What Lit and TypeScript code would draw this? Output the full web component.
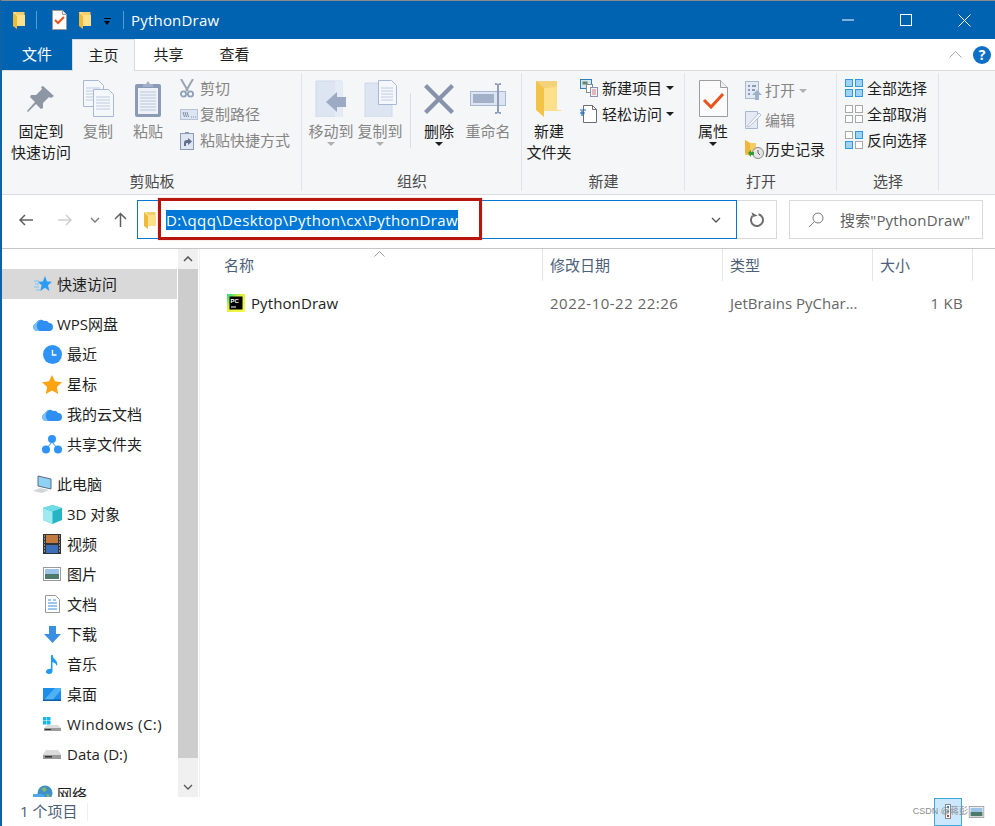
import { LitElement, html, css, svg } from "lit";
import { customElement } from "lit/decorators.js";

const folderSmall = html`<svg width="12" height="18" viewBox="0 0 12 18"><path d="M0 1h11.500v13.500H3z" fill="#f3cf6b"/><path d="M4 4h8v11H4z" fill="#fde08a"/><path d="M0 1l4 3v14l-4-3z" fill="#f0b93a"/><path d="M0 1h2l2 3v1z" fill="#fbe7a6"/></svg>`;
const folderBig = html`<svg width="26" height="37" viewBox="0 0 26 37"><path d="M0 1h21v5h0v24H0z" fill="#f4d279"/><path d="M7 9l14-3v24l5 0H7z" fill="#fbdc7e"/><path d="M0 1l8 7v29L0 30z" fill="#f3c248"/><path d="M8 8h13v22h4l1 1H8z" fill="#fce08c"/></svg>`;
const taskCheck = html`<svg width="15" height="20" viewBox="0 0 15 20"><path d="M.5.5h10l4 4v15H.5z" fill="#fbfbfb" stroke="#9a9a9a"/><path d="M10.500.5v4h4" fill="#eee" stroke="#9a9a9a"/><path d="M3 10l3 3 6-6" fill="none" stroke="#e8541c" stroke-width="2"/></svg>`;
const pin = html`<svg width="28" height="27" viewBox="0 0 28 27"><path d="M16 1l11 10-3 2-2-1-6 6 0 5-2 1-5-5-8 8-1-1 8-9-5-5 1-2 5 0 6-6-1-2z" fill="#8d97a3"/></svg>`;
const page = (x: number, y: number, w: number, h: number) => svg`<path d="M${x + .5} ${y + .5}h${w - 5}l5 5v${h - 5}h-${w}z" fill="#f4f7fc" stroke="#a8b8d4"/><path d="M${x + 3} ${y + 8}h${w - 6}M${x + 3} ${y + 11}h${w - 6}M${x + 3} ${y + 14}h${w - 6}M${x + 3} ${y + 17}h${w - 6}M${x + 3} ${y + 20}h${w - 6}" stroke="#c0cce0"/>`;
const copy = html`<svg width="31" height="37" viewBox="0 0 31 37">${page(0, 0, 20, 26)}${page(10, 9, 20, 27)}</svg>`;
const clipboard = html`<svg width="28" height="38" viewBox="0 0 28 38"><rect x="1" y="4" width="26" height="33" rx="2" fill="#8b9ab6"/><rect x="4" y="8" width="20" height="26" fill="#eef2f8"/><path d="M6 12h16M6 15h16M6 18h16M6 21h16M6 24h16M6 27h16M6 30h16" stroke="#b9c6dc"/><path d="M9 7V4h3l2-3 2 3h3v3z" fill="#a4b0c8"/></svg>`;
const scissors = html`<svg width="14" height="19" viewBox="0 0 14 19"><path d="M1 0l7 12M13 0L6 12" stroke="#9aa4b4" stroke-width="2"/><circle cx="3.500" cy="15" r="2.600" fill="none" stroke="#8ea0ba" stroke-width="1.800"/><circle cx="10.500" cy="15" r="2.600" fill="none" stroke="#8ea0ba" stroke-width="1.800"/></svg>`;
const copyPath = html`<svg width="18" height="11" viewBox="0 0 18 11"><rect x=".5" y=".5" width="17" height="10" fill="#dde5f2" stroke="#b5c2d8"/><path d="M3 3l1.500 5M5 3l1.500 5M7 3l1.500 5" stroke="#7f8fa9"/><path d="M11 8h1M13 8h1M15 8h1" stroke="#7f8fa9"/></svg>`;
const pasteShort = html`<svg width="14" height="19" viewBox="0 0 14 19"><rect x=".5" y="2.500" width="13" height="16" fill="#dfe6f2" stroke="#8b9ab6"/><path d="M5 3V1h4v2z" fill="#8b9ab6"/><path d="M4 15v-3q0-3 3-3h1V7l4 3.500-4 3.500v-2H7q-1 0-1 1v2z" fill="#5f6f8c"/></svg>`;
const moveTo = html`<svg width="33" height="37" viewBox="0 0 33 37"><path d="M1 1h26v36H1z" fill="#dde5f2" stroke="#cfd9ea"/><path d="M20 1h7v36h-7z" fill="#e6ecf6"/><path d="M12 29l11-10v5h9v10h-9v5z" fill="#9caac3" transform="translate(-1 -7)"/></svg>`;
const copyTo = html`<svg width="33" height="37" viewBox="0 0 33 37"><path d="M1 3h27v34H1z" fill="#dde5f2" stroke="#cfd9ea"/>${page(14, 0, 18, 24)}</svg>`;
const del = html`<svg width="32" height="32" viewBox="0 0 32 32"><path d="M4 1l12 12L28 1l3 3-12 12 12 12-3 3-12-12L4 31l-3-3 12-12L1 4z" fill="#8793ab"/></svg>`;
const rename = html`<svg width="37" height="33" viewBox="0 0 37 33"><rect x=".5" y="9.500" width="35" height="14" fill="#dde5f2" stroke="#a9b8d2"/><rect x="3" y="12" width="21" height="9" fill="#a2b0c8"/><path d="M25 1q2 0 3 1 1-1 3-1v2h-2v27h2v2q-2 0-3-1-1 1-3 1v-2h2V3h-2z" fill="#8f9eb8"/></svg>`;
const newItem = html`<svg width="18" height="18" viewBox="0 0 18 18"><rect x=".5" y=".5" width="11" height="9" fill="#d6e4f2" stroke="#2f7fb8"/><rect x="2.500" y="2.500" width="5" height="3" fill="#5f8a6a"/><rect x="6.500" y="5.500" width="6" height="8" fill="#fff" stroke="#8a8a8a"/><rect x="10.500" y="8.500" width="7" height="9" fill="#f2f4fa" stroke="#8a93ad"/><path d="M12 11h4M12 13h4M12 15h4" stroke="#d57a7a"/></svg>`;
const easy = html`<svg width="17" height="18" viewBox="0 0 17 18"><path d="M3.500.5h9l4 4v13h-13z" fill="#fff" stroke="#6d6d6d"/><path d="M12.500.5v4h4" fill="none" stroke="#6d6d6d"/><path d="M0 5h6M0 8h5M2 6v5" stroke="#1a6fc0" stroke-width="1.200" fill="none"/></svg>`;
const props = html`<svg width="29" height="37" viewBox="0 0 29 37"><path d="M.5.5h21l7 7v29H.5z" fill="#fbfbfb" stroke="#9c9c9c"/><path d="M21.500.5v7h7" fill="#eee" stroke="#9c9c9c"/><path d="M5 20l7 7L24 14" fill="none" stroke="#e8541c" stroke-width="3"/></svg>`;
const openIcon = html`<svg width="17" height="19" viewBox="0 0 17 19"><rect x=".5" y=".5" width="13" height="17" fill="#e4eaf4" stroke="#a9b8d2"/><path d="M3 4h2v2H3zM3 8h2v2H3zM3 12h2v2H3zM7 4h4v2H7zM7 8h3v2H7z" fill="#8a9bb5"/><path d="M12 9l5 5h-3v5h-4v-5H7z" fill="#9db0cc"/></svg>`;
const edit = html`<svg width="17" height="18" viewBox="0 0 17 18"><path d="M.5.500h12v17H.5z" fill="#e4eaf4" stroke="#a9b8d2"/><path d="M3 14L14 2l2 2L5 15l-3 1z" fill="#f5f7fb" stroke="#b5c2d8"/></svg>`;
const history = html`<svg width="19" height="19" viewBox="0 0 19 19"><path d="M0 0l5 3h6v12H0z" fill="#f4cc60"/><path d="M0 0l5 3v13l-5-3z" fill="#eeb63c"/><circle cx="13" cy="13" r="5.500" fill="#e6e6e6" stroke="#888"/><path d="M13 10v3l2 2" stroke="#666" fill="none"/><path d="M3 13l3-3v2h3v3H6v2z" fill="#2f9e34"/></svg>`;
const cell = (x: number, y: number, on: boolean) => svg`<rect x="${x + .5}" y="${y + .5}" width="7" height="7" fill="${on ? "#9fd2f5" : "#fff"}" stroke="${on ? "#2f9ae0" : "#a8a8a8"}"/>`;
const sel = (on: number[]) => html`<svg width="18" height="18" viewBox="0 0 18 18">${[[0, 0], [10, 0], [0, 10], [10, 10]].map((p, i) => cell(p[0], p[1], on.includes(i)))}</svg>`;

const arrowL = (c: string) => html`<svg width="16" height="12" viewBox="0 0 16 12"><path d="M15 6H2M7 1L2 6l5 5" fill="none" stroke="${c}" stroke-width="1.500"/></svg>`;
const arrowR = (c: string) => html`<svg width="16" height="12" viewBox="0 0 16 12"><path d="M1 6h13M9 1l5 5-5 5" fill="none" stroke="${c}" stroke-width="1.500"/></svg>`;
const chevDown = (c: string, w = 10) => html`<svg width="${w}" height="6" viewBox="0 0 10 6"><path d="M1 1l4 4 4-4" fill="none" stroke="${c}" stroke-width="1.300"/></svg>`;
const arrowUp = html`<svg width="13" height="15" viewBox="0 0 13 15"><path d="M6.500 15V2M1 7l5.500-5.500L12 7" fill="none" stroke="#606060" stroke-width="1.500"/></svg>`;
const refresh = html`<svg width="16" height="16" viewBox="0 0 16 16"><path d="M9.500 2.200A6 6 0 1 1 3.500 4" fill="none" stroke="#6d6d6d" stroke-width="2"/><path d="M3 0l.5 5 5-.5z" fill="#6d6d6d" transform="rotate(-10 4 3)"/></svg>`;
const search = html`<svg width="16" height="16" viewBox="0 0 16 16"><circle cx="10" cy="6" r="5" fill="none" stroke="#7a7a7a"/><path d="M6.500 9.500L1 15" stroke="#7a7a7a"/></svg>`;

const star = html`<svg width="18" height="17" viewBox="0 0 18 17"><path d="M11 0l2 5.500 5 .3-4 3.500 1.400 5.700L11 11.800 6.200 15 7.600 9.300 3.800 5.800l5-.3z" fill="#2b9cf2"/><path d="M0 5h5M1 8h4M0 11h5M2 14h4" stroke="#7cc3f7"/></svg>`;
const cloud = (w = 20) => html`<svg width="${w}" height="${Math.round(w * .65)}" viewBox="0 0 20 13"><path d="M4 13a4 4 0 0 1-1-7.800A5 5 0 0 1 11 3a4.500 4.500 0 0 1 5 2 4 4 0 0 1 0 8z" fill="#2f8ff0"/><path d="M4 13a4 4 0 0 1-1-7.800A5 5 0 0 1 8 2a6 6 0 0 0-1 11z" fill="#7ec0fa"/></svg>`;
const clock = html`<svg width="19" height="19" viewBox="0 0 19 19"><circle cx="9.500" cy="9.500" r="9.500" fill="#2e93f5"/><path d="M9.500 5v5h4" fill="none" stroke="#fff" stroke-width="1.400"/></svg>`;
const starO = html`<svg width="20" height="19" viewBox="0 0 20 19"><path d="M10 0l3 6.300 7 .9-5.100 4.800L16.200 19 10 15.600 3.800 19l1.300-7L0 7.200l7-.9z" fill="#fca311"/></svg>`;
const share = html`<svg width="20" height="19" viewBox="0 0 20 19"><circle cx="10" cy="4" r="4" fill="#2e93f5"/><circle cx="4" cy="14.500" r="4" fill="#2e93f5"/><circle cx="16" cy="14.500" r="4" fill="#2e93f5"/><path d="M10 7L5 13M10 7l5 6" stroke="#2e93f5"/></svg>`;
const pc = html`<svg width="20" height="19" viewBox="0 0 20 19"><path d="M5 1l13 3v10L5 11z" fill="#8fd0f5" stroke="#5b6d7f"/><path d="M0 16l7-3 9 2-7 3z" fill="#d0d5da"/></svg>`;
const cube = html`<svg width="19" height="19" viewBox="0 0 19 19"><path d="M9.500 0L19 3v12l-9.500 4L0 15V3z" fill="#25b5c6"/><path d="M0 3l9.500 3.500V19L0 15z" fill="#9eeaf0"/><path d="M9.500 0L19 3 9.500 6.500 0 3z" fill="#6fdce6"/></svg>`;
const film = html`<svg width="18" height="20" viewBox="0 0 18 20"><rect width="18" height="20" fill="#333"/><rect x="3" y="1" width="12" height="8" fill="#c27a3e"/><rect x="3" y="11" width="12" height="8" fill="#3d6fb8"/><path d="M1 2h1M1 5h1M1 8h1M1 11h1M1 14h1M1 17h1M16 2h1M16 5h1M16 8h1M16 11h1M16 14h1M16 17h1" stroke="#ddd"/></svg>`;
const pic = (w = 18, h = 14) => html`<svg width="${w}" height="${h}" viewBox="0 0 18 14"><rect x=".5" y=".5" width="17" height="13" fill="#fff" stroke="#9a9a9a"/><rect x="2" y="2" width="14" height="5" fill="#9dc3e8"/><rect x="2" y="7" width="14" height="5" fill="#4f7a6a"/></svg>`;
const doc = html`<svg width="15" height="18" viewBox="0 0 15 18"><path d="M.5.500h10l4 4v13H.5z" fill="#fff" stroke="#9a9a9a"/><path d="M3 5h3M8 5h3M3 8h9M3 11h9M3 14h9" stroke="#3b8fdb"/></svg>`;
const down = html`<svg width="17" height="17" viewBox="0 0 17 17"><path d="M5 0h7v8h5l-8.500 9L0 8h5z" fill="#3b8fe0"/></svg>`;
const music = html`<svg width="12" height="19" viewBox="0 0 12 19"><path d="M5 0h1.500q.5 3 3 5t1.500 6q-1-3-4.500-4v9q0 3-3.500 3T0 16.500Q0 14 5 13.500z" fill="#1e9bf0"/></svg>`;
const desktop = html`<svg width="18" height="13" viewBox="0 0 18 13"><rect width="18" height="13" fill="#1c8de8"/><path d="M0 13L12 0h6v2L9 13z" fill="#4fb0f4"/><rect y="11.500" width="18" height="1.500" fill="#0f5ea8"/></svg>`;
const drive = html`<svg width="18" height="9" viewBox="0 0 18 9"><path d="M3 0h12l3 4v5H0V4z" fill="#dcdcdc"/><path d="M0 5h18v4H0z" fill="#9a9a9a"/><rect x="2" y="6" width="7" height="1.500" fill="#333"/></svg>`;
const winDrive = html`<svg width="19" height="14" viewBox="0 0 19 14"><g fill="#13b5ea"><rect width="3.500" height="3.500"/><rect x="4" width="3.500" height="3.500"/><rect y="4" width="3.500" height="3.500"/><rect x="4" y="4" width="3.500" height="3.500"/></g><path d="M4 8h11l3 3v3H1v-3z" fill="#dcdcdc"/><path d="M1 11h17v3H1z" fill="#9a9a9a"/><rect x="2" y="12" width="6" height="1" fill="#333"/></svg>`;
const globe = html`<svg width="20" height="19" viewBox="0 0 20 19"><circle cx="12" cy="8" r="7.500" fill="#3f8fc8"/><path d="M8 4l4-2 2 3-3 2zM13 9l4 1-2 4z" fill="#86b56e"/><path d="M0 9h9l3 2v8H0z" fill="#4fa6e8"/></svg>`;
const pycharm = html`<svg width="18" height="18" viewBox="0 0 18 18"><defs><linearGradient id="pg" x1="0" y1="0" x2="1" y2="1"><stop offset="0" stop-color="#21d789"/><stop offset=".4" stop-color="#dff03f"/><stop offset="1" stop-color="#fcf84a"/></linearGradient></defs><rect width="18" height="18" fill="url(#pg)"/><rect x="2.500" y="2.500" width="13" height="13" fill="#000"/><text x="3.500" y="9" font-size="6" font-weight="700" fill="#fff" font-family="Liberation Sans">PC</text><rect x="4" y="12.500" width="5" height="1" fill="#fff"/></svg>`;
const help = html`<svg width="18" height="18" viewBox="0 0 18 18"><circle cx="9" cy="9" r="9" fill="#0f6fc6"/><text x="9" y="14" text-anchor="middle" font-size="14" font-weight="700" fill="#fff" font-family="Open Sans">?</text></svg>`;

const navItems: { icon: unknown; label: string; lv: number; sel?: boolean; gap?: boolean; wide?: boolean }[] = [
  { icon: star, label: "快速访问", lv: 1, sel: true },
  { icon: cloud(), label: "WPS网盘", lv: 1, gap: true },
  { icon: clock, label: "最近", lv: 2 },
  { icon: starO, label: "星标", lv: 2 },
  { icon: cloud(), label: "我的云文档", lv: 2 },
  { icon: share, label: "共享文件夹", lv: 2 },
  { icon: pc, label: "此电脑", lv: 1, gap: true },
  { icon: cube, label: "3D 对象", lv: 2 },
  { icon: film, label: "视频", lv: 2 },
  { icon: pic(), label: "图片", lv: 2 },
  { icon: doc, label: "文档", lv: 2 },
  { icon: down, label: "下载", lv: 2 },
  { icon: music, label: "音乐", lv: 2 },
  { icon: desktop, label: "桌面", lv: 2 },
  { icon: winDrive, label: "Windows (C:)", lv: 2, wide: true },
  { icon: drive, label: "Data (D:)", lv: 2 },
  { icon: globe, label: "网络", lv: 1, gap: true },
];

@customElement("app-root")
export class AppRoot extends LitElement {
  static styles = css`
    :host { display: block; width: 995px; height: 826px; overflow: hidden; position: relative; background: #fff;
      font-family: "Open Sans", "Noto Sans CJK SC", sans-serif; font-size: 15px; line-height: 21px; color: #1e1e1e;
      box-sizing: border-box; border-left: 2px solid #0e62a8; border-top: 1px solid #8a8a8a; }
    * { box-sizing: border-box; }
    svg { display: block; flex: none; }
    .title { height: 38px; margin-left: -2px; background: #0063b1; color: #fff; display: flex; align-items: center; padding: 0 1px 0 13px; }
    .title .name { letter-spacing: .2px; margin-left: -1px; }
    .qsep { width: 1px; height: 18px; background: #5b9bcf; margin: 0 15px 0 11px; }
    .qsep.last { margin: 0 8px 0 0; }
    .qgap { width: 12px; }
    .qcaret { width: 7px; height: 7px; margin: 2px 12px 0 13px; border-top: 1px solid #000; position: relative; }
    .qcaret::after { content: ""; position: absolute; left: 0; top: 2px; border: 3.5px solid transparent; border-top: 4px solid #000; border-bottom: 0; }
    .winbtns { margin-left: auto; display: flex; align-items: center; }
    .winbtn { width: 58.5px; height: 38px; display: flex; align-items: center; justify-content: center; }
    .tabs { height: 32px; display: flex; border-bottom: 1px solid #dadbdc; align-items: stretch; position: relative; margin-left: -2px; padding-left: 2px; }
    .tab { display: flex; align-items: center; justify-content: center; width: 65px; padding-bottom: 1px; }
    .tab.wide { width: 67px; }
    .tab.file { background: #0063b1; color: #fff; margin-left: -2px; padding-left: 2px; width: 72px; margin-bottom: -1px; height: 31px; }
    .tab.on { width: 63px; background: #f5f6f7; border: 1px solid #dadbdc; border-bottom: 0; margin-bottom: -1px; height: 32px; }
    .tabtools { margin-left: auto; display: flex; align-items: center; gap: 11px; padding-right: 4px; }
    .ribbon { height: 124px; background: #f5f6f7; border-bottom: 1px solid #dadbdc; display: flex; padding-bottom: 1px; }
    .group { display: flex; flex-direction: column; position: relative; }
    .group::after { content: ""; position: absolute; right: 0; top: 2px; bottom: 2px; width: 1px; background: #e1e3e6; }
    .g1 { width: 300px; } .g2 { width: 220px; } .g3 { width: 163px; } .g4 { width: 152px; } .g5 { width: 102px; }
    .content { flex: 1; display: flex; padding-top: 5px; min-height: 0; }
    .glabel { text-align: center; height: 21px; margin-bottom: 1px; color: #4a4a4a; flex: none; }
    .big { display: flex; flex-direction: column; align-items: center; text-align: center; white-space: nowrap; flex: none; }
    .icon { height: 45px; display: flex; align-items: center; justify-content: center; }
    .dim { color: #858585; }
    .w78 { width: 78px; } .w36 { width: 36px; } .w64 { width: 64px; } .w58 { width: 58px; } .w40 { width: 40px; }
    .w56 { width: 56px; } .w42 { width: 42px; } .w54 { width: 54px; }
    .caret { width: 0; height: 0; border: 4px solid transparent; border-top: 4px solid #1e1e1e; border-bottom: 0; margin-top: 0; }
    .caret.dim { border-top-color: #b0b0b0; }
    .inline { margin: 0 0 0 4px; }
    .vsep { width: 1px; height: 55px; background: #dcdee1; margin: 17px 0 0 10px; flex: none; }
    .rows { display: flex; flex-direction: column; white-space: nowrap; padding-left: 4px; margin-top: -1px; }
    .rows.p0 { padding-left: 0; }
    .rows.p8 { padding-left: 8px; }
    .row { height: 26px; display: flex; align-items: center; }
    .rows.tall { margin-top: 0; }
    .rows.tall .row { height: 29.5px; }
    .slot { width: 20px; display: flex; justify-content: flex-start; flex: none; }
    .s22 .slot { width: 22px; }
    .addr { height: 54px; padding-top: 5px; display: flex; align-items: flex-start; border-bottom: 1px solid #c6c6c6; }
    .nav { width: 135px; height: 39px; display: flex; align-items: center; padding-left: 16px; flex: none; }
    .nav .a { margin-right: 23px; } .nav .b { margin-right: 17px; } .nav .c { margin-right: 14px; }
    .bar { width: 600px; height: 39px; border: 1px solid #0078d7; display: flex; align-items: center; padding: 0 15px 0 6px; flex: none; }
    .bar .txt { margin-left: 10px; background: #0078d7; color: #fff; height: 20px; line-height: 20px; white-space: nowrap; letter-spacing: .39px; }
    .bar .end { margin-left: auto; }
    .ref { width: 40px; height: 39px; border: 1px solid #d9d9d9; border-left: 0; display: flex; align-items: center; justify-content: center; flex: none; }
    .search { width: 194px; height: 39px; margin-left: 12px; border: 1px solid #d9d9d9; display: flex; align-items: center; padding: 1px 0 0 18px; color: #5f5f5f; white-space: nowrap; flex: none; letter-spacing: .15px; }
    .search svg { margin-right: 16px; }
    .redbox { position: absolute; left: 156px; top: 197px; width: 324px; height: 42px; border: 3px solid #b8160c; box-shadow: 0 0 1px #d98a85; }
    .main { height: 548px; display: flex; }
    .side { width: 176px; padding-top: 20px; overflow: hidden; flex: none; }
    .item { height: 30px; display: flex; align-items: center; white-space: nowrap; }
    .item.sel { background: #d9d9d9; margin-right: 1px; }
    .item.gap { margin-top: 10px; }
    .item.wide { letter-spacing: .42px; }
    .item .ic { width: 20px; display: flex; justify-content: center; flex: none; margin-right: 4px; }
    .item.l1 { padding-left: 31px; } .item.l2 { padding-left: 40px; }
    .item.l2 .ic { margin-right: 5px; }
    .scroll { width: 20px; background: #f0f0f0; display: flex; flex-direction: column; align-items: center; flex: none; }
    .sbtn { height: 20px; width: 100%; display: flex; align-items: center; justify-content: center; flex: none; }
    .thumb { width: 100%; height: 489px; background: #cdcdcd; flex: none; }
    .sfill { flex: 1; }
    .list { flex: 1; border-left: 1px solid #f0f0f0; position: relative; margin-left: 1px; }
    .cols { display: grid; grid-template-columns: 343px 180px 150px 100px; }
    .head { height: 32px; color: #4c607a; }
    .head > div { border-right: 1px solid #e5e5e5; padding: 6px 0 0 7px; }
    .head > div:first-child { padding-left: 24px; }
    .sort { position: absolute; left: 174px; top: 2px; }
    .frow { margin-top: 11px; height: 22px; align-items: center; color: #666; white-space: nowrap; }
    .frow > div { padding-left: 7px; }
    .frow .name { display: flex; align-items: center; gap: 6px; padding-left: 27px; color: #1e1e1e; letter-spacing: .1px; }
    .frow .date { letter-spacing: .5px; }
    .frow .size { text-align: right; padding: 0 10px 0 0; letter-spacing: .3px; }
    .status { height: 29px; display: flex; align-items: center; padding-left: 18px; color: #4c607a; position: relative; }
    .status .s { width: 1px; height: 18px; background: #eee; margin-left: 10px; }
    .views { margin-left: auto; display: flex; align-items: center; height: 100%; padding-right: 10px; gap: 6px; }
    .vbtn { width: 28px; height: 28px; border: 1px solid #3fa6dd; background: #cce8ff; display: flex; align-items: center; justify-content: center; }
    .wm { position: absolute; right: 27px; top: 4px; font: 9px/20px "Liberation Sans", "Noto Sans CJK SC", sans-serif; color: #8c8c8c; white-space: nowrap; }
  `;

  private big(icon: unknown, label: unknown, cls: string, dim = false, caret = false) {
    return html`<div class="big ${cls} ${dim ? "dim" : ""}">
      <div class="icon">${icon}</div><div>${label}</div>
      ${caret ? html`<div class="caret ${dim ? "dim" : ""}"></div>` : ""}
    </div>`;
  }
  private row(icon: unknown, label: string, dim = false, caret = "") {
    return html`<div class="row ${dim ? "dim" : ""}"><div class="slot">${icon}</div>${label}${caret ? html`<div class="caret inline ${caret === "dim" ? "dim" : ""}"></div>` : ""}</div>`;
  }

  render() {
    return html`
      <div class="title">
        ${folderSmall}<div class="qsep"></div>${taskCheck}<div class="qgap"></div>${folderSmall}
        <div class="qcaret"></div><div class="qsep last"></div><span class="name">PythonDraw</span>
        <div class="winbtns">
          <div class="winbtn"><svg width="12" height="2" viewBox="0 0 12 2"><path d="M0 1h12" stroke="#fff"/></svg></div>
          <div class="winbtn"><svg width="12" height="12" viewBox="0 0 12 12"><rect x=".5" y=".5" width="11" height="11" fill="none" stroke="#fff"/></svg></div>
          <div class="winbtn"><svg width="13" height="13" viewBox="0 0 13 13"><path d="M.5.5l12 12M12.500.5l-12 12" stroke="#fff"/></svg></div>
        </div>
      </div>
      <div class="tabs">
        <div class="tab file">文件</div><div class="tab on">主页</div><div class="tab wide">共享</div><div class="tab">查看</div>
        <div class="tabtools"><svg width="13" height="7" viewBox="0 0 13 7"><path d="M.5 6.500l6-6 6 6" fill="none" stroke="#a8a8a8"/></svg>${help}</div>
      </div>
      <div class="ribbon">
        <div class="group g1"><div class="content">
          ${this.big(pin, html`固定到<br>快速访问`, "w78")}
          ${this.big(copy, "复制", "w36", true)}
          ${this.big(clipboard, "粘贴", "w64", true)}
          <div class="rows p0">
            ${this.row(scissors, "剪切", true)}${this.row(copyPath, "复制路径", true)}${this.row(pasteShort, "粘贴快捷方式", true)}
          </div>
        </div><div class="glabel">剪贴板</div></div>
        <div class="group g2"><div class="content">
          ${this.big(moveTo, "移动到", "w58", true, true)}
          ${this.big(copyTo, "复制到", "w40", true, true)}
          <div class="vsep"></div>
          ${this.big(del, "删除", "w56", false, true)}
          ${this.big(rename, "重命名", "w42", true)}
        </div><div class="glabel">组织</div></div>
        <div class="group g3"><div class="content">
          ${this.big(folderBig, html`新建<br>文件夹`, "w54")}
          <div class="rows s22">${this.row(newItem, "新建项目", false, "on")}${this.row(easy, "轻松访问", false, "on")}</div>
        </div><div class="glabel">新建</div></div>
        <div class="group g4"><div class="content">
          ${this.big(props, "属性", "w56", false, true)}
          <div class="rows tall">${this.row(openIcon, "打开", true, "dim")}${this.row(edit, "编辑", true)}${this.row(history, "历史记录")}</div>
        </div><div class="glabel">打开</div></div>
        <div class="group g5"><div class="content">
          <div class="rows p8 s22">${this.row(sel([0, 1, 2, 3]), "全部选择")}${this.row(sel([]), "全部取消")}${this.row(sel([1, 2]), "反向选择")}</div>
        </div><div class="glabel">选择</div></div>
      </div>
      <div class="addr">
        <div class="nav"><span class="a">${arrowL("#606060")}</span><span class="b">${arrowR("#cfcfcf")}</span><span class="c">${chevDown("#777")}</span>${arrowUp}</div>
        <div class="bar">${folderSmall}<span class="txt">D:\\qqq\\Desktop\\Python\\cx\\PythonDraw</span><span class="end">${chevDown("#555")}</span></div>
        <div class="ref">${refresh}</div>
        <div class="search">${search}搜索"PythonDraw"</div>
      </div>
      <div class="redbox"></div>
      <div class="main">
        <div class="side">
          ${navItems.map((n) => html`<div class="item l${n.lv} ${n.sel ? "sel" : ""} ${n.gap ? "gap" : ""} ${n.wide ? "wide" : ""}"><div class="ic">${n.icon}</div><span>${n.label}</span></div>`)}
        </div>
        <div class="scroll">
          <div class="sbtn"><svg width="10" height="6" viewBox="0 0 10 6"><path d="M1 5l4-4 4 4" fill="none" stroke="#555" stroke-width="1.500"/></svg></div>
          <div class="thumb"></div><div class="sfill"></div>
          <div class="sbtn">${chevDown("#555")}</div>
        </div>
        <div class="list">
          <svg class="sort" width="11" height="6" viewBox="0 0 11 6"><path d="M.5 5.500l5-5 5 5" fill="none" stroke="#9a9a9a"/></svg>
          <div class="cols head"><div>名称</div><div>修改日期</div><div>类型</div><div>大小</div></div>
          <div class="cols frow"><div class="name">${pycharm}PythonDraw</div><div class="date">2022-10-22 22:26</div><div>JetBrains PyChar...</div><div class="size">1 KB</div></div>
        </div>
      </div>
      <div class="status">
        <span>1 个项目</span><div class="s"></div>
        <div class="views">
          <div class="vbtn"><svg width="6" height="15" viewBox="0 0 6 15"><rect x=".5" y=".5" width="5" height="14" fill="#fff" stroke="#888"/><rect x="2" y="2" width="2" height="2" fill="#2f7fd0"/><rect x="2" y="6.500" width="2" height="2" fill="#6a6a6a"/><rect x="2" y="11" width="2" height="2" fill="#d03a2a"/></svg></div>
          ${pic(17, 12)}
        </div>
        <div class="wm">CSDN @蒋彭</div>
      </div>
    `;
  }
}
